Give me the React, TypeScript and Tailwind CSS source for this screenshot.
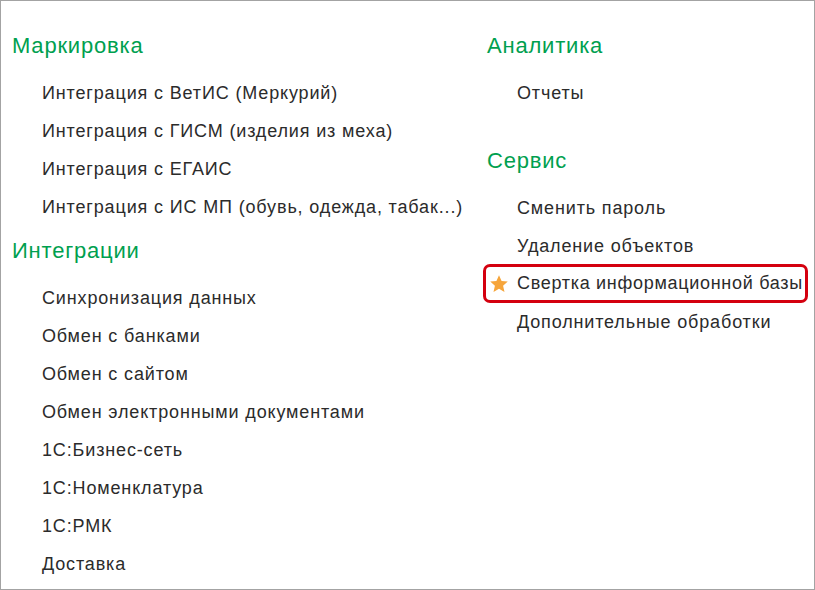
const groupsLeft = [
  {
    title: "Маркировка",
    items: [
      "Интеграция с ВетИС (Меркурий)",
      "Интеграция с ГИСМ (изделия из меха)",
      "Интеграция с ЕГАИС",
      "Интеграция с ИС МП (обувь, одежда, табак...)",
    ],
  },
  {
    title: "Интеграции",
    items: [
      "Синхронизация данных",
      "Обмен с банками",
      "Обмен с сайтом",
      "Обмен электронными документами",
      "1С:Бизнес-сеть",
      "1С:Номенклатура",
      "1С:РМК",
      "Доставка",
    ],
  },
];

function Heading({ children }: { children: string }) {
  return (
    <div className="h-[38px] mb-[10px] flex items-center text-[22px] tracking-[0.8px] text-[#00a04f]">
      {children}
    </div>
  );
}

function Item({ children }: { children: string }) {
  return (
    <div className="h-[38px] flex items-center pl-[30px] text-[18px] tracking-[0.85px] text-[#2b2b2b] whitespace-nowrap">
      {children}
    </div>
  );
}

function Star() {
  return (
    <svg width="20" height="20" viewBox="0 0 24 24" className="shrink-0">
      <path
        d="M12 1.5l3.1 6.9 7.4.7-5.6 5 1.7 7.4L12 17.6l-6.6 3.9 1.7-7.4-5.6-5 7.4-.7z"
        fill="#f6a53b"
      />
    </svg>
  );
}

export default function App() {
  return (
    <div
      className="w-[815px] h-[590px] bg-white border border-[#a3a3a3] flex pt-[25px] overflow-hidden"
      style={{ fontFamily: '"Liberation Sans", Arial, sans-serif' }}
    >
      <div className="w-[482px] shrink-0 pl-[11px]">
        {groupsLeft.map((g, i) => (
          <div key={g.title} className={i > 0 ? "mt-[5px]" : ""}>
            <Heading>{g.title}</Heading>
            {g.items.map((it) => (
              <Item key={it}>{it}</Item>
            ))}
          </div>
        ))}
      </div>
      <div className="w-[325px] shrink-0">
        <div className="pl-[4px]">
          <Heading>Аналитика</Heading>
          <Item>Отчеты</Item>
        </div>
        <div className="pl-[4px] mt-[29px]">
          <Heading>Сервис</Heading>
          <Item>Сменить пароль</Item>
          <Item>Удаление объектов</Item>
        </div>
        <div className="h-[39px] -mt-px flex items-center border-[3px] border-[#d4000f] rounded-[7px] pl-[3px] text-[18px] tracking-[0.7px] text-[#2b2b2b]">
          <Star />
          <span className="ml-[8px] whitespace-nowrap">Свертка информационной базы</span>
        </div>
        <div className="pl-[4px]">
          <Item>Дополнительные обработки</Item>
        </div>
      </div>
    </div>
  );
}
